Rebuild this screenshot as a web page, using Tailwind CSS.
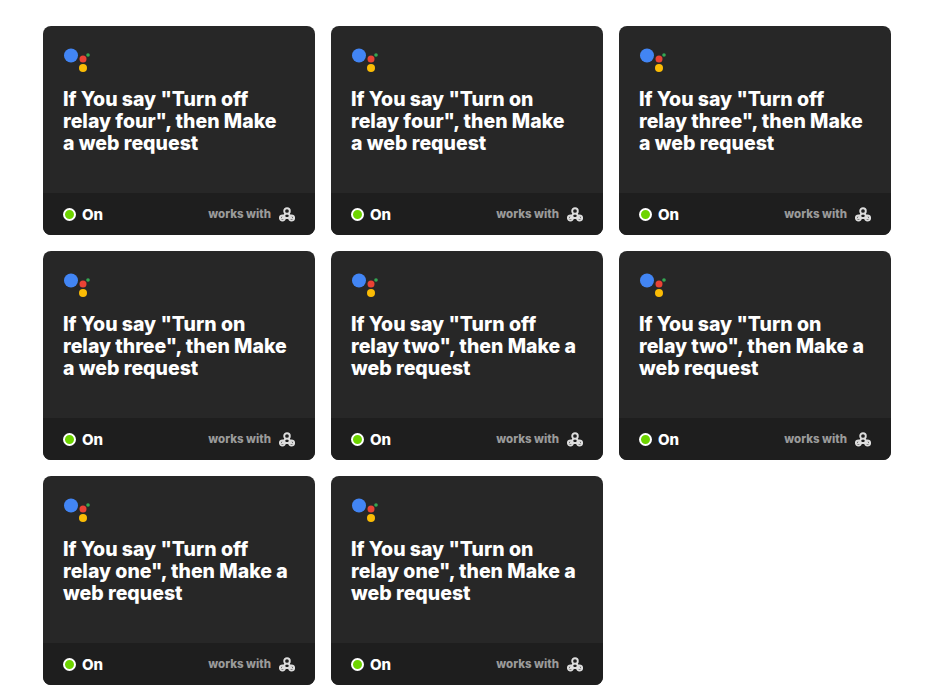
<!DOCTYPE html>
<html lang="en">
<head>
  <meta charset="utf-8" />
  <title>Applets</title>
  <script src="https://cdn.jsdelivr.net/npm/@tailwindcss/browser@4"></script>
</head>
<body class="bg-white font-['Inter',sans-serif]">
  <div id="grid" class="grid grid-cols-[272px_272px_272px] gap-4 pl-[43px] pt-[26px]"></div>

<script>
const TITLES=[
  'If You say "Turn off<br>relay four", then Make<br>a web request',
  'If You say "Turn on<br>relay four", then Make<br>a web request',
  'If You say "Turn off<br>relay three", then Make<br>a web request',
  'If You say "Turn on<br>relay three", then Make<br>a web request',
  'If You say "Turn off<br>relay two", then Make a<br>web request',
  'If You say "Turn on<br>relay two", then Make a<br>web request',
  'If You say "Turn off<br>relay one", then Make a<br>web request',
  'If You say "Turn on<br>relay one", then Make a<br>web request'
];

document.getElementById('grid').innerHTML=TITLES.map(t=>`
  <div class="h-[209px] rounded-lg overflow-hidden bg-[#272727] flex flex-col text-white">
    <div class="flex-1 px-5 pt-[21px]">
      <svg width="30" height="26" viewBox="0 0 30 26" class="block"><circle cx="8" cy="8.5" r="7" fill="#4285f4"/><circle cx="20" cy="12" r="3.5" fill="#ea4335"/><circle cx="25" cy="8" r="1.8" fill="#34a853"/><circle cx="20" cy="21" r="4" fill="#fbbc05"/></svg>
      <p class="mt-[15px] text-[19.5px] leading-[22px] font-extrabold whitespace-nowrap">${t}</p>
    </div>
    <div class="h-[42px] bg-[#1e1e1e] flex items-center px-5">
      <span class="w-[13px] h-[13px] rounded-full bg-[#6dd400] border-2 border-white"></span>
      <span class="ml-[6px] mt-[2px] text-[15px] font-extrabold">On</span>
      <span class="ml-auto mt-[2px] text-[11.5px] font-extrabold text-[#9a9a9a]">works with</span>
      <svg width="16" height="15" viewBox="0 0 16 15" fill="none" stroke="#ddd" stroke-width="1.9" class="ml-2"><circle cx="8" cy="4" r="2.8"/><circle cx="3.4" cy="11" r="2.5"/><circle cx="12.6" cy="11" r="2.5"/><path d="M6.6 6.4 3.4 11h9.2L9.4 6.4"/></svg>
    </div>
  </div>`).join('');
</script>
</body>
</html>
